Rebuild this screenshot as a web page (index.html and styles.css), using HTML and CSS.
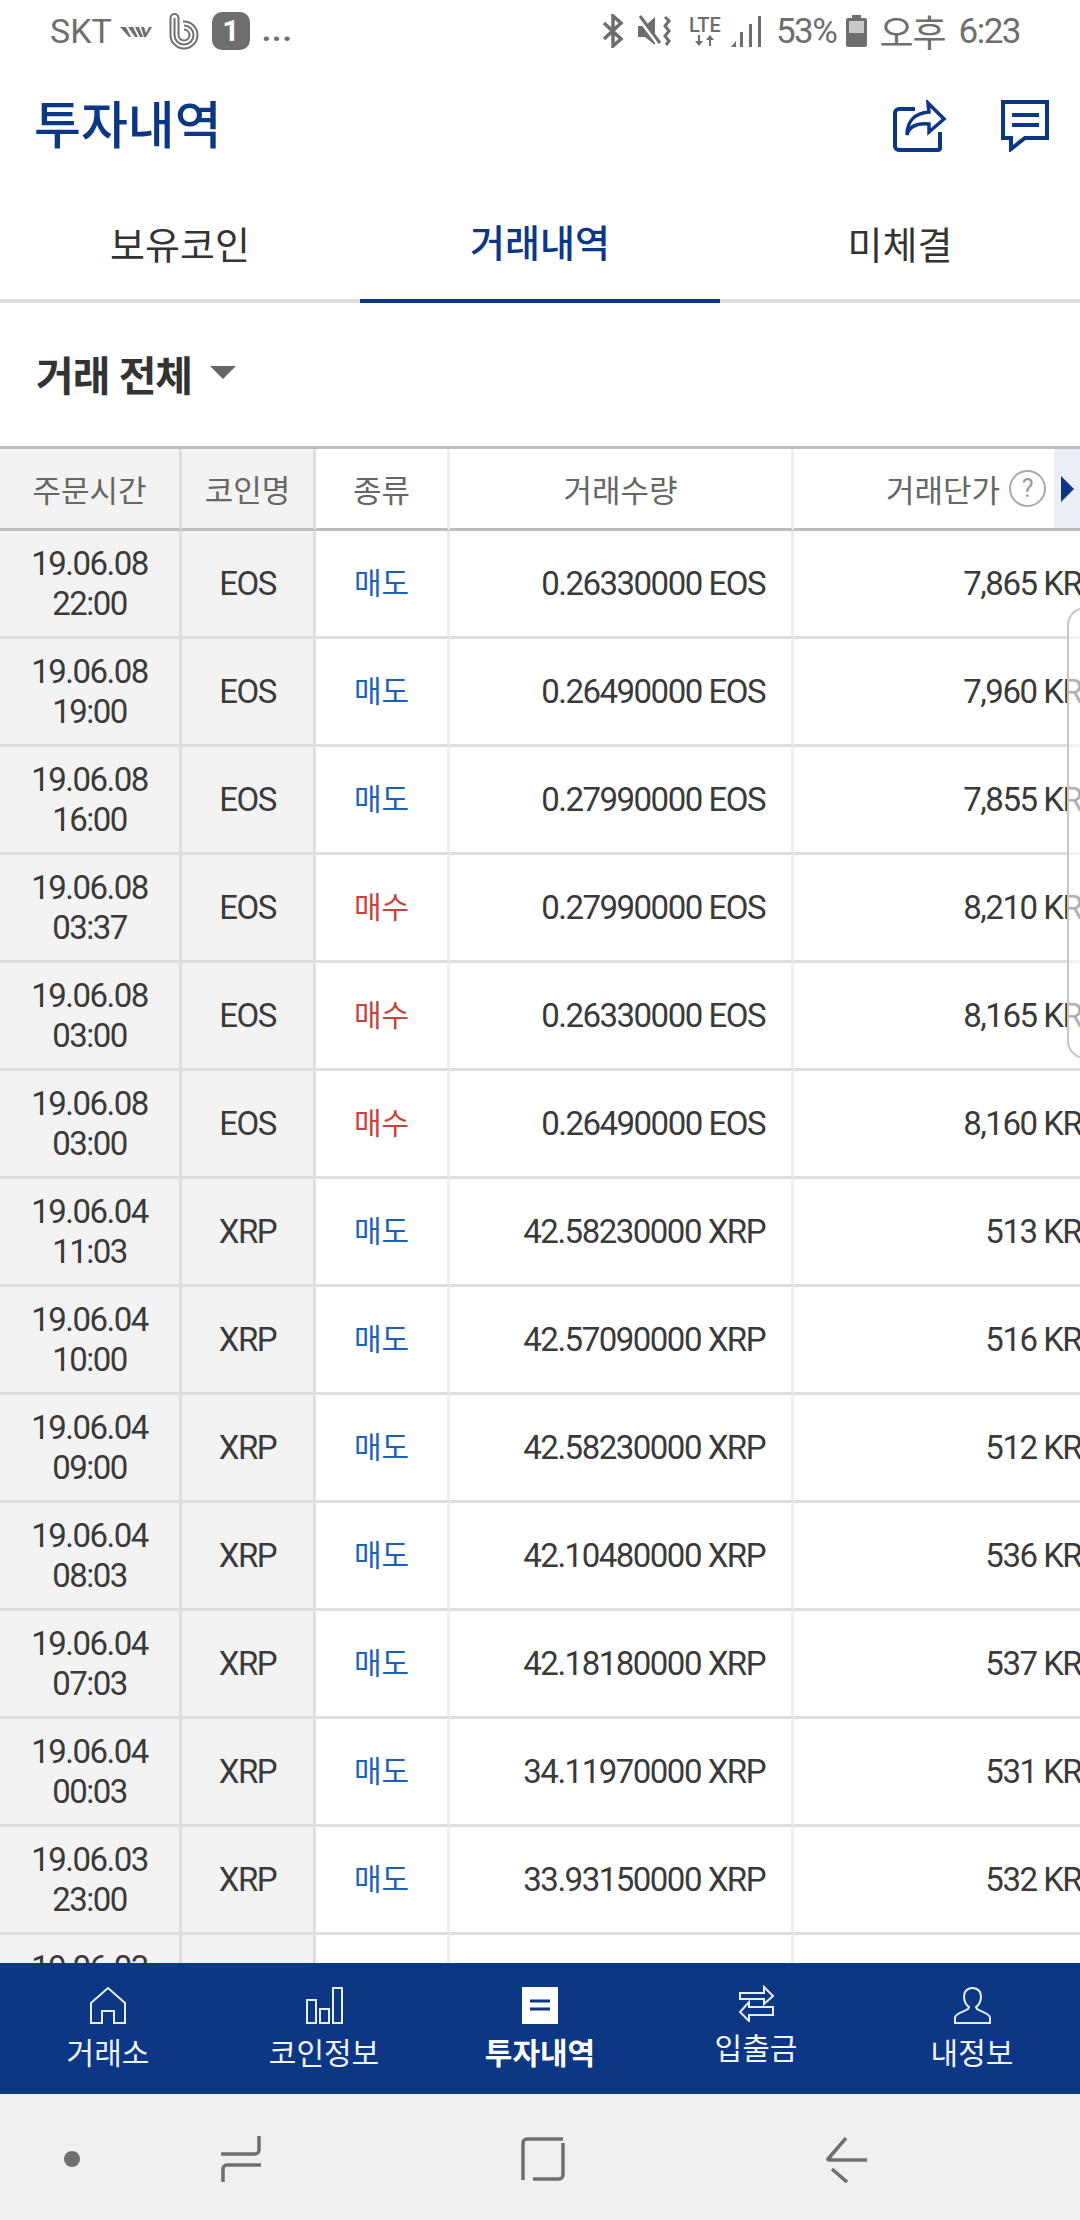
FILE: index.html
```html
<!DOCTYPE html>
<html lang="ko">
<head>
  <meta charset="UTF-8">
  <meta name="viewport" content="width=device-width, initial-scale=1.0">
  <title>투자내역</title>
  <link rel="stylesheet" href="styles.css">
</head>
<body>

<!-- Status bar -->
<div class="status">
  <div class="status-left">
    <span class="carrier">SKT</span>
    <svg class="st-wave" width="32" height="12" viewBox="0 0 32 12"><path d="M0 1h6l5 10h-2zM8 1h5l5 10h-3zM15 1h4l4 10h-3zM21 1h3l2 6 3-6h3l-6 10h-2z" fill="#6e6e6e"/></svg>
    <svg class="st-b" width="31" height="38" viewBox="0 0 31 38" fill="none" stroke="#707070" stroke-width="2"><path d="M1.500 6v17a13.500 13.500 0 1 0 13.500-13.500h-1"/><path d="M1.500 6a4 4 0 0 1 8 0v17a5.500 5.500 0 1 0 5.500-5.500"/><path d="M5.500 6v17a9.500 9.500 0 1 0 9.500-9.500"/></svg>
    <span class="st-badge">1</span>
    <span class="st-dots">...</span>
  </div>
  <div class="status-right">
    <svg width="22" height="34" viewBox="0 0 22 34" fill="none" stroke="#6e6e6e" stroke-width="3.500"><path d="M2 9l17 16-8 7V2l8 7L2 25"/></svg>
    <svg class="st-mute" width="34" height="32" viewBox="0 0 34 32"><path d="M0 11h7l10-9v28l-10-8H0z" fill="#6e6e6e"/><path d="M0 1l21 28" stroke="#fff" stroke-width="5"/><path d="M2 1l20 27" stroke="#6e6e6e" stroke-width="3"/><path d="M27 2l4 4-4 5 4 5-4 5 4 5-3 4" fill="none" stroke="#6e6e6e" stroke-width="3"/></svg>
    <span class="st-lte">
      <span class="lte-text">LTE</span>
      <svg width="20" height="12" viewBox="0 0 20 12" fill="#6e6e6e"><path d="M3 0h2v6h3l-4 5-4-5h3zM14 11h2V5h3l-4-5-4 5h3z"/></svg>
    </span>
    <svg class="st-signal" width="31" height="31" viewBox="0 0 31 31" fill="#6e6e6e"><path d="M0 31l5-6v6zM9 16h3v15H9zM18 8h3v23h-3zM27 0h3v31h-3z"/></svg>
    <span class="st-text st-pct">53%</span>
    <svg class="st-batt" width="21" height="32" viewBox="0 0 21 32"><path d="M6 0h9v3h4a2 2 0 0 1 2 2v25a2 2 0 0 1-2 2H2a2 2 0 0 1-2-2V5a2 2 0 0 1 2-2h4z" fill="#6e6e6e"/><rect x="3" y="6" width="15" height="12" fill="#c8c8c8"/></svg>
    <span class="st-text st-ampm">오후</span>
    <span class="st-text st-time">6:23</span>
  </div>
</div>

<!-- Title -->
<div class="header">
  <h1 class="title">투자내역</h1>
  <div class="header-icons">
    <svg width="54" height="52" viewBox="0 0 54 52" fill="none" stroke="#0b3785"><path d="M22 9H6a4 4 0 0 0-4 4v33a4 4 0 0 0 4 4h39a2 2 0 0 0 2-2V32" stroke-width="4"/><path d="M35 3l16 16-15 13V24c-13-1-20 3-22 11 0-14 8-22 22-23z" stroke-width="3.500"/></svg>
    <svg width="48" height="52" viewBox="0 0 48 52" fill="none" stroke="#0b3785" stroke-width="4"><path d="M2 2h44v36H24L10 49V38H2zM11 15h27M11 25h27"/></svg>
  </div>
</div>

<div class="tabs">
  <div class="tab">보유코인</div>
  <div class="tab active">거래내역</div>
  <div class="tab">미체결</div>
</div>

<div class="filter">
  <span>거래 전체</span>
  <i class="caret"></i>
</div>

<!-- Table -->
<div class="table-wrap">
  <table class="trades">
    <colgroup>
      <col class="c1"><col class="c2"><col class="c3"><col class="c4"><col class="c5">
    </colgroup>
    <thead>
      <tr>
        <th class="gray">주문시간</th>
        <th class="gray">코인명</th>
        <th>종류</th>
        <th>거래수량</th>
        <th class="price-head"><span class="price-label">거래단가<span class="help">?</span></span></th>
      </tr>
    </thead>
    <tbody>
      <tr><td class="gray">19.06.08<br>22:00</td><td class="gray">EOS</td><td class="sell">매도</td><td class="num">0.26330000 EOS</td><td class="num">7,865 KRW</td></tr>
      <tr><td class="gray">19.06.08<br>19:00</td><td class="gray">EOS</td><td class="sell">매도</td><td class="num">0.26490000 EOS</td><td class="num">7,960 KRW</td></tr>
      <tr><td class="gray">19.06.08<br>16:00</td><td class="gray">EOS</td><td class="sell">매도</td><td class="num">0.27990000 EOS</td><td class="num">7,855 KRW</td></tr>
      <tr><td class="gray">19.06.08<br>03:37</td><td class="gray">EOS</td><td class="buy">매수</td><td class="num">0.27990000 EOS</td><td class="num">8,210 KRW</td></tr>
      <tr><td class="gray">19.06.08<br>03:00</td><td class="gray">EOS</td><td class="buy">매수</td><td class="num">0.26330000 EOS</td><td class="num">8,165 KRW</td></tr>
      <tr><td class="gray">19.06.08<br>03:00</td><td class="gray">EOS</td><td class="buy">매수</td><td class="num">0.26490000 EOS</td><td class="num">8,160 KRW</td></tr>
      <tr><td class="gray">19.06.04<br>11:03</td><td class="gray">XRP</td><td class="sell">매도</td><td class="num">42.58230000 XRP</td><td class="num">513 KRW</td></tr>
      <tr><td class="gray">19.06.04<br>10:00</td><td class="gray">XRP</td><td class="sell">매도</td><td class="num">42.57090000 XRP</td><td class="num">516 KRW</td></tr>
      <tr><td class="gray">19.06.04<br>09:00</td><td class="gray">XRP</td><td class="sell">매도</td><td class="num">42.58230000 XRP</td><td class="num">512 KRW</td></tr>
      <tr><td class="gray">19.06.04<br>08:03</td><td class="gray">XRP</td><td class="sell">매도</td><td class="num">42.10480000 XRP</td><td class="num">536 KRW</td></tr>
      <tr><td class="gray">19.06.04<br>07:03</td><td class="gray">XRP</td><td class="sell">매도</td><td class="num">42.18180000 XRP</td><td class="num">537 KRW</td></tr>
      <tr><td class="gray">19.06.04<br>00:03</td><td class="gray">XRP</td><td class="sell">매도</td><td class="num">34.11970000 XRP</td><td class="num">531 KRW</td></tr>
      <tr><td class="gray">19.06.03<br>23:00</td><td class="gray">XRP</td><td class="sell">매도</td><td class="num">33.93150000 XRP</td><td class="num">532 KRW</td></tr>
      <tr><td class="gray">19.06.03<br>22:00</td><td class="gray">XRP</td><td class="sell"></td><td class="num"></td><td class="num"></td></tr>
    </tbody>
  </table>
  <div class="scroll-hint"><i></i></div>
</div>

<!-- Samsung edge handle -->
<div class="edge-panel"></div>

<!-- Bottom menu -->
<div class="menu">
  <div class="menu-item">
    <svg width="36" height="37" viewBox="0 0 36 37" fill="none" stroke="#e8edf6" stroke-width="2"><path d="M1 36V16L18 1l17 15v20H24V24H12v12z"/></svg>
    <span>거래소</span>
  </div>
  <div class="menu-item">
    <svg width="37" height="37" viewBox="0 0 37 37" fill="none" stroke="#e8edf6" stroke-width="2"><path d="M1 13h9v23H1zM14 22h9v14h-9zM27 1h9v35h-9z"/></svg>
    <span>코인정보</span>
  </div>
  <div class="menu-item on">
    <svg width="36" height="37" viewBox="0 0 36 37"><rect width="36" height="37" fill="#fff"/><path d="M8 14h20M8 22h20" stroke="#0b3785" stroke-width="3"/></svg>
    <span>투자내역</span>
  </div>
  <div class="menu-item shift">
    <svg width="37" height="37" viewBox="0 0 37 37" fill="none" stroke="#e8edf6" stroke-width="2"><path d="M2 8h24V2l9 9-9 8v-5H2zM35 22H11v-5l-9 10 9 9v-6h24z"/></svg>
    <span>입출금</span>
  </div>
  <div class="menu-item">
    <svg width="37" height="37" viewBox="0 0 37 37" fill="none" stroke="#e8edf6" stroke-width="2"><path d="M1 36v-5c0-5 9-6 13-9l1-2c-3-2-5-6-5-11 0-5 4-8 8.500-8S27 4 27 9c0 5-2 9-5 11l1 2c4 3 13 4 13 9v5z"/></svg>
    <span>내정보</span>
  </div>
</div>

<!-- Android buttons -->
<div class="sysnav">
  <i class="sys-dot"></i>
  <svg class="sys-recent" width="40" height="46" viewBox="0 0 40 46" fill="none" stroke="#6f6f6f" stroke-width="3.500"><path d="M38 0v14a4 4 0 0 1-4 4H0M40 29H6a4 4 0 0 0-4 4v13"/></svg>
  <svg class="sys-home" width="44" height="44" viewBox="0 0 44 44" fill="none" stroke="#6f6f6f" stroke-width="3.500"><path d="M2 43V6a4 4 0 0 1 4-4h36M42 6v32a4 4 0 0 1-4 4H12"/></svg>
  <svg class="sys-back" width="42" height="46" viewBox="0 0 42 46" fill="none" stroke="#6f6f6f" stroke-width="3.500"><path d="M21 1L3 22a1 1 0 0 0 1 1h38M7 32l15 13"/></svg>
</div>

</body>
</html>
```

FILE: styles.css
```css
* {
  box-sizing: border-box;
}
html, body {
  margin: 0;
  height: 2220px;
}
body {
  width: 1080px;
  position: relative;
  display: flex;
  flex-direction: column;
  overflow: hidden;
  background: white;
  font-family: Roboto, "Noto Sans CJK KR", sans-serif;
  color: #333;
}

/* Status bar */
.status {
  height: 62px;
  flex: none;
  display: flex;
  justify-content: space-between;
  align-items: center;
  padding: 0 60px 0 50px;
  color: #6e6e6e;
}
.status-left, .status-right {
  display: flex;
  align-items: center;
}
.carrier {
  font-size: 34px;
}
.st-wave {
  margin: 2px 0 0 8px;
}
.st-b {
  margin: 0 0 0 17px;
}
.st-badge {
  width: 38px;
  height: 38px;
  margin-left: 12px;
  border-radius: 10px;
  background: #6e6e6e;
  color: white;
  font-size: 30px;
  font-weight: 700;
  line-height: 38px;
  text-align: center;
}
.st-dots {
  margin: 0 0 0 12px;
  font-size: 32px;
  font-weight: 700;
  line-height: 1;
  letter-spacing: 1px;
  position: relative;
  top: -1px;
}
.status-right svg {
  flex: none;
}
.st-mute {
  margin-left: 14px;
}
.st-lte {
  width: 36px;
  margin-left: 15px;
  display: flex;
  flex-direction: column;
  align-items: center;
}
.lte-text {
  font-size: 20px;
  line-height: 19px;
  font-weight: 500;
}
.st-signal {
  margin-left: 8px;
}
.st-text {
  font-size: 35px;
  letter-spacing: -1.500px;
}
.st-pct {
  margin-left: 14px;
}
.st-batt {
  margin-left: 10px;
}
.st-ampm {
  margin-left: 12px;
  font-size: 37px;
  letter-spacing: -1px;
}
.st-time {
  margin-left: 13px;
}

/* Title row */
.header {
  height: 128px;
  flex: none;
  display: flex;
  justify-content: space-between;
  align-items: center;
  padding: 0 31px 0 34px;
}
.title {
  margin: 0;
  padding-top: 2px;
  font-size: 51px;
  font-weight: 500;
  line-height: 70px;
  color: #0b3785;
}
.header-icons {
  display: flex;
  gap: 54px;
}

/* Tabs */
.tabs {
  height: 113px;
  flex: none;
  display: flex;
  border-bottom: 4px solid #ddd;
}
.tab {
  flex: 1;
  height: 113px;
  padding-bottom: 8px;
  display: flex;
  align-items: center;
  justify-content: center;
  font-size: 38px;
  color: #333;
}
.tab.active {
  color: #0b3785;
  font-weight: 500;
  border-bottom: 4px solid #0b3785;
}

.filter {
  height: 143px;
  flex: none;
  display: flex;
  align-items: center;
  gap: 18px;
  padding: 0 0 4px 36px;
  font-size: 41px;
  font-weight: 700;
  letter-spacing: -1px;
  color: #333;
}
.caret {
  width: 0;
  height: 0;
  border-left: 13px solid transparent;
  border-right: 13px solid transparent;
  border-top: 13px solid #666;
}

/* Table */
.table-wrap {
  flex: 1;
  position: relative;
  overflow: hidden;
  border-top: 3px solid #bdbdbd;
}
.trades {
  width: 1138px;
  table-layout: fixed;
  border-collapse: separate;
  border-spacing: 0;
}
.c1 { width: 182px; }
.c2, .c3 { width: 134px; }
.c4 { width: 344px; }
.c5 { width: 344px; }
.trades th {
  height: 82px;
  padding: 0;
  font-size: 31px;
  font-weight: 400;
  color: #666;
  border-right: 3px solid #eee;
  border-bottom: 3px solid #bdbdbd;
}
.trades td {
  height: 108px;
  padding: 0;
  font-size: 33px;
  line-height: 40px;
  letter-spacing: -1.500px;
  text-align: center;
  color: #3a3a3a;
  border-right: 3px solid #eee;
  border-bottom: 3px solid #dedede;
}
.trades .gray {
  background: #f3f3f3;
  border-right-color: #dedede;
}
.trades td.num {
  text-align: right;
  padding-right: 26px;
}
.trades td.sell, .trades td.buy {
  font-size: 30px;
  letter-spacing: 0;
}
.trades td.sell {
  color: #1c62b4;
}
.trades td.buy {
  color: #c8433e;
}
.trades th.price-head {
  text-align: left;
  padding-left: 92px;
  border-right: none;
}
.price-label {
  display: inline-flex;
  align-items: center;
}
.help {
  width: 37px;
  height: 37px;
  margin-left: 9px;
  border: 2px solid #aaa;
  border-radius: 50%;
  font-size: 25px;
  line-height: 33px;
  text-align: center;
  color: #999;
}
.scroll-hint {
  position: absolute;
  top: 0;
  right: 0;
  width: 26px;
  height: 79px;
  background: #eceef5;
  padding: 27px 0 0 7px;
}
.scroll-hint i {
  display: block;
  width: 0;
  height: 0;
  border-top: 13px solid transparent;
  border-bottom: 13px solid transparent;
  border-left: 13px solid #0b3785;
}
.edge-panel {
  position: absolute;
  top: 607px;
  left: 1067px;
  width: 30px;
  height: 452px;
  border: 2px solid #c6c6c6;
  border-radius: 18px 0 0 18px;
  background: rgba(255, 255, 255, 0.6);
}

/* Bottom menu */
.menu {
  height: 131px;
  flex: none;
  display: flex;
  background: #0b3785;
}
.menu-item {
  flex: 1;
  padding-top: 24px;
  display: flex;
  flex-direction: column;
  align-items: center;
  gap: 10px;
  font-size: 30px;
  line-height: 40px;
  color: #f2f4f9;
}
.menu-item.on {
  font-weight: 700;
  color: white;
}
.menu-item.shift {
  padding-top: 22px;
  gap: 7px;
}

/* System buttons */
.sysnav {
  height: 126px;
  flex: none;
  position: relative;
  background: #f0f0f0;
}
.sysnav > * {
  position: absolute;
}
.sys-dot {
  left: 64px;
  top: 57px;
  width: 16px;
  height: 16px;
  border-radius: 50%;
  background: #6f6f6f;
}
.sys-recent {
  left: 221px;
  top: 42px;
}
.sys-home {
  left: 521px;
  top: 43px;
}
.sys-back {
  left: 825px;
  top: 43px;
}
```
